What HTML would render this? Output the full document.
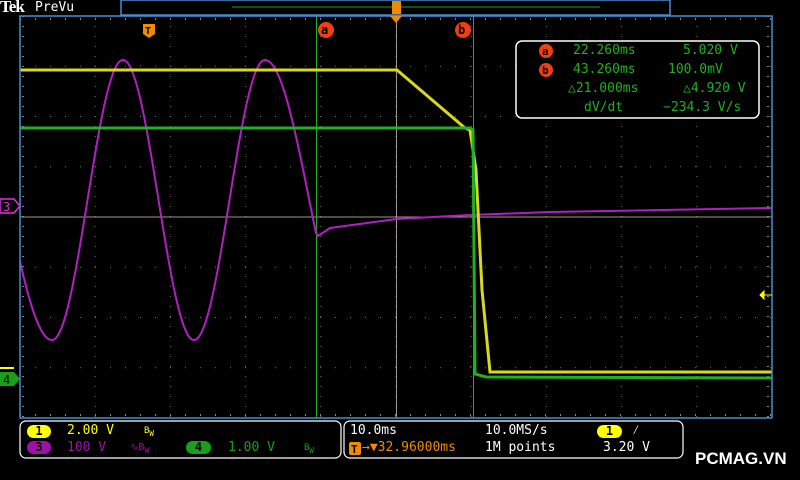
<!DOCTYPE html>
<html><head><style>
body{margin:0;width:800px;height:480px;background:#000;overflow:hidden;position:relative;font-family:"DejaVu Sans Mono","Liberation Mono",monospace}
.t{position:absolute;font-size:13px;white-space:pre;line-height:16px}
.pill{position:absolute;border-radius:8px;height:13px;text-align:center;font-size:12px;line-height:13px;font-weight:bold}
</style></head><body>
<svg width="800" height="480" style="position:absolute;left:0;top:0">
<rect x="0" y="0" width="800" height="480" fill="#000"/>
<rect x="121" y="0" width="549" height="15" fill="#000" stroke="#4a8ad0" stroke-width="1.5"/>
<line x1="232" y1="7" x2="600" y2="7" stroke="#1fa01f" stroke-width="1"/>
<rect x="392" y="1" width="9" height="13" fill="#f08a00"/>
<g id="grid"></g>
<line x1="20" y1="217" x2="772" y2="217" stroke="#a09880" stroke-width="1"/>
<line x1="396.5" y1="16" x2="396.5" y2="418" stroke="#a09880" stroke-width="1"/>
<line x1="316.5" y1="16" x2="316.5" y2="418" stroke="#1fb01f" stroke-width="1"/>
<line x1="473.5" y1="16" x2="473.5" y2="418" stroke="#1fb01f" stroke-width="1"/>
<path id="sine" fill="none" stroke="#b020c0" stroke-width="2"/>
<path d="M20,70 L397,70 L465,128 L470,130 L476,170 L482,290 L490,372 L772,372" fill="none" stroke="#d8d820" stroke-width="3"/>
<path d="M20,128 L470,128 L473,130 L475,374 L486,377 L772,378" fill="none" stroke="#20b020" stroke-width="3"/>
<rect x="20" y="16" width="752" height="402" fill="none" stroke="#4a8ad0" stroke-width="1.5"/>
<polygon points="390,16 402,16 396,23" fill="#f08a00"/>
<polygon points="772,295 764,295 764,291 760,295 764,299 764,295" fill="#ffff00" stroke="#ffff00"/>
<polygon points="0,199 14,199 20,206 14,213 0,213" fill="#000" stroke="#e030e0" stroke-width="1.5"/>
<text x="3" y="211" font-size="12" fill="#e030e0" font-family="DejaVu Sans Mono">3</text>
<line x1="0" y1="368" x2="14" y2="368" stroke="#ffff00" stroke-width="2"/>
<polygon points="0,372 14,372 20,379 14,386 0,386" fill="#18a018"/>
<text x="3" y="384" font-size="12" fill="#000" font-family="DejaVu Sans Mono">4</text>
<path d="M143,24 h12 v10 l-6,4 l-6,-4z" fill="#f08a00"/>
<text x="145" y="34" font-size="10" font-weight="bold" fill="#000" font-family="DejaVu Sans Mono">T</text>
<circle cx="326" cy="30" r="8" fill="#f04010"/><text x="321" y="34" font-size="12" font-weight="bold" fill="#000" font-family="DejaVu Sans Mono">a</text>
<circle cx="463" cy="30" r="8" fill="#f04010"/><text x="458" y="34" font-size="12" font-weight="bold" fill="#000" font-family="DejaVu Sans Mono">b</text>
<rect x="516" y="41" width="243" height="77" rx="6" fill="#000" stroke="#fff" stroke-width="1.5"/>
<circle cx="546" cy="51" r="7" fill="#f04010"/><text x="542" y="55" font-size="11" font-weight="bold" fill="#000" font-family="DejaVu Sans Mono">a</text>
<circle cx="546" cy="70" r="7" fill="#f04010"/><text x="542" y="74" font-size="11" font-weight="bold" fill="#000" font-family="DejaVu Sans Mono">b</text>
<rect x="20" y="421" width="321" height="37" rx="6" fill="none" stroke="#fff" stroke-width="1.2"/>
<rect x="344" y="421" width="339" height="37" rx="6" fill="none" stroke="#fff" stroke-width="1.2"/>
<rect x="349" y="442" width="12" height="13" rx="2" fill="#f08a00"/>
<text x="351" y="453" font-size="11" font-weight="bold" fill="#000" font-family="DejaVu Sans Mono">T</text>
</svg>
<div class="t" style="left:0;top:-1px;font-family:'Liberation Serif',serif;font-weight:bold;font-size:17px;color:#fff;letter-spacing:-1px">Tek</div>
<div class="t" style="left:35px;top:0;font-size:13px;color:#fff">PreVu</div>
<div class="t" style="left:573px;top:43px;color:#1fb01f">22.260ms</div>
<div class="t" style="left:683px;top:43px;color:#1fb01f">5.020 V</div>
<div class="t" style="left:573px;top:62px;color:#1fb01f">43.260ms</div>
<div class="t" style="left:668px;top:62px;color:#1fb01f">100.0mV</div>
<div class="t" style="left:568px;top:81px;color:#1fb01f">△21.000ms</div>
<div class="t" style="left:683px;top:81px;color:#1fb01f">△4.920 V</div>
<div class="t" style="left:584px;top:100px;color:#1fb01f">dV/dt</div>
<div class="t" style="left:663px;top:100px;color:#1fb01f">−234.3 V/s</div>
<div class="pill" style="left:27px;top:425px;width:24px;background:#ffff00;color:#000">1</div>
<div class="t" style="left:67px;top:423px;color:#ffff00">2.00 V</div>
<div class="t" style="left:144px;top:423px;color:#ffff00;font-size:9px">B<sub>W</sub></div>
<div class="pill" style="left:27px;top:441px;width:24px;background:#a010a8;color:#000">3</div>
<div class="t" style="left:67px;top:440px;color:#a010a8">100 V</div>
<div class="t" style="left:130px;top:440px;color:#a010a8;font-size:10px">∿B<sub>W</sub></div>
<div class="pill" style="left:186px;top:441px;width:25px;background:#18a018;color:#000">4</div>
<div class="t" style="left:228px;top:440px;color:#18a018">1.00 V</div>
<div class="t" style="left:304px;top:440px;color:#18a018;font-size:9px">B<sub>W</sub></div>
<div class="t" style="left:350px;top:423px;color:#fff">10.0ms</div>
<div class="t" style="left:485px;top:423px;color:#fff">10.0MS/s</div>
<div class="pill" style="left:597px;top:425px;width:25px;background:#ffff00;color:#000">1</div>
<div class="t" style="left:632px;top:423px;color:#fff">⁄</div>
<div class="t" style="left:362px;top:440px;color:#f08a00">→▼32.96000ms</div>
<div class="t" style="left:485px;top:440px;color:#fff">1M points</div>
<div class="t" style="left:603px;top:440px;color:#fff">3.20 V</div>
<div class="t" style="left:695px;top:451px;color:#fff;font-family:'Liberation Sans',sans-serif;font-weight:bold;font-size:17px">PCMAG.VN</div>
<script>
var g=document.getElementById('grid'),s='';
var xs=[],ys=[];for(var i=0;i<=10;i++)xs.push(20+i*75.2);for(var j=0;j<=8;j++)ys.push(16+j*50.25);
for(var j=1;j<8;j++)for(var x=20;x<772;x+=15)s+='<rect x="'+x+'" y="'+(ys[j]-0.5)+'" width="1" height="1" fill="#777"/>';
for(var i=1;i<10;i++)for(var y=16;y<418;y+=10)s+='<rect x="'+(xs[i]-0.5)+'" y="'+y+'" width="1" height="1" fill="#777"/>';
for(var x=20;x<772;x+=15){s+='<rect x="'+x+'" y="18" width="1" height="2" fill="#888"/><rect x="'+x+'" y="414" width="1" height="2" fill="#888"/>';}
for(var y=16;y<418;y+=10){s+='<rect x="22" y="'+y+'" width="2" height="1" fill="#888"/><rect x="767" y="'+y+'" width="2" height="1" fill="#888"/>';}
g.innerHTML=s;
var d='';for(var x=20;x<=316;x++){var y;
if(x<52)y=200+140*Math.cos(2*Math.PI*(x-52)/180);
else if(x<=265)y=200+140*Math.cos(2*Math.PI*(x-52)/142);
else y=200-140*Math.cos(2*Math.PI*(x-265)/177);
d+=(x==20?'M':'L')+x+','+y.toFixed(1);}
d+=' L318,236 L330,228 L397,219 L470,215 L550,212 L772,208';
document.getElementById('sine').setAttribute('d',d);
</script>
</body></html>
